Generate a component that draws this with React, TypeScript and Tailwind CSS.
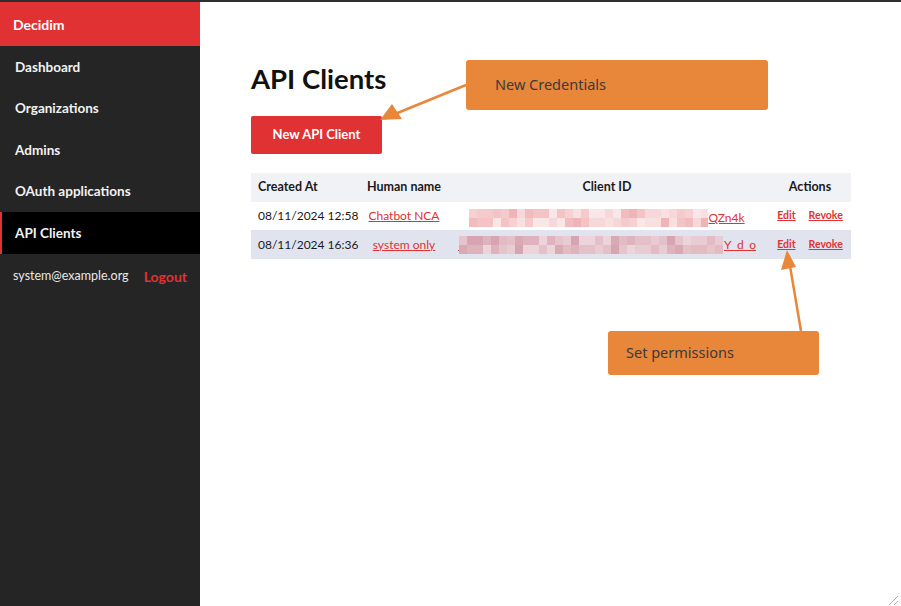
import { ReactNode } from "react";

// sidebar entries, one is active
const menu = ["Dashboard", "Organizations", "Admins", "OAuth applications", "API Clients"];

interface ApiClient {
  id: number;
  created_at: string;
  name: string;
  prefix: string;
  tail: string;
  blurWidth: number;
}

const clients: ApiClient[] = [
  { id: 1, created_at: "08/11/2024 12:58", name: "Chatbot NCA", prefix: "", tail: "QZn4k", blurWidth: 239 },
  { id: 2, created_at: "08/11/2024 16:36", name: "system only", prefix: "_", tail: "Y_d_o", blurWidth: 265 },
];

// pinkish tones for the pixelated (redacted) client id
const tones = [
  "bg-[#f6d0d2]", "bg-[#f3c3c6]", "bg-[#f8dfe0]", "bg-[#f1bcc0]",
  "bg-[#f9e6e7]", "bg-[#efb3b8]", "bg-[#f5cacd]", "bg-[#f7d8da]",
];
const tones2 = [
  "bg-[#e6c4cc]", "bg-[#deb3bd]", "bg-[#e9ccd3]", "bg-[#d9a9b4]",
  "bg-[#ecd4da]", "bg-[#e2bbc4]", "bg-[#d7a5b1]", "bg-[#e4c0c8]",
];

function Mosaic({ width, alt }: { width: number; alt: boolean }) {
  const cells = Math.round(width / 8);
  const palette = alt ? tones2 : tones;
  return (
    <span className="inline-flex flex-col h-[18px] overflow-hidden" style={{ width }}>
      {[0, 1].map((r) => (
        <span key={r} className="flex h-[9px]">
          {Array.from({ length: cells }).map((_, i) => (
            <span key={i} className={`w-[8px] h-[9px] shrink-0 ${palette[(i * 5 + r * 3 + ((i * i) % 7)) % 8]}`} />
          ))}
        </span>
      ))}
    </span>
  );
}

function Callout({ className, children }: { className: string; children: ReactNode }) {
  return (
    <div
      className={`absolute bg-[#e8863a] rounded-[3px] text-[#3b3b3b] text-[14.5px] flex items-center ${className}`}
      style={{ fontFamily: '"Noto Sans", sans-serif' }}
    >
      {children}
    </div>
  );
}

export default function App() {
  return (
    <div
      className="relative flex w-[901px] h-[606px] overflow-hidden bg-white border-t-2 border-[#2e2e2e]"
      style={{ fontFamily: 'Lato, "Liberation Sans", sans-serif' }}
    >
      {/* Sidebar */}
      <aside className="w-[200px] shrink-0 bg-[#252525] flex flex-col">
        <div className="h-[44px] bg-[#e03133] text-white font-bold text-[14px] flex items-center pl-[13px]">
          Decidim
        </div>
        {menu.map((item) => {
          const active = item === "API Clients";
          return (
            <div
              key={item}
              className={`h-[41.5px] flex items-center text-[13.5px] font-bold text-[#f2f2f2] ${
                active ? "bg-black border-l-2 border-[#e03133] pl-[13px]" : "pl-[15px]"
              }`}
            >
              {item}
            </div>
          );
        })}
        <div className="flex items-center justify-between h-[46px] pl-[13px] pr-[13px]">
          <span className="text-[12.5px] text-[#e8e8e8]">system@example.org</span>
          <span className="text-[14px] font-bold text-[#e03133]">Logout</span>
        </div>
      </aside>

      {/* Main content */}
      <main className="flex-1 pl-[51px] pr-[50px] pt-[60px]">
        <h1 className="text-[27.5px] font-bold text-[#111] leading-[34px]">API Clients</h1>
        <button className="mt-[20px] w-[131px] h-[38px] bg-[#e03133] rounded-[2px] text-white text-[13px] font-bold">
          New API Client
        </button>

        <table className="mt-[19px] w-[600px] table-fixed border-collapse text-[12px] text-[#1a1a1a]">
          <colgroup>
            <col className="w-[112px]" />
            <col className="w-[82px]" />
            <col className="w-[324px]" />
            <col className="w-[82px]" />
          </colgroup>
          <thead className="bg-[#f1f2f6] text-[12.5px]">
            <tr className="h-[29px]">
              <th className="text-left pl-[7px] font-bold">Created At</th>
              <th className="text-center font-bold whitespace-nowrap">Human name</th>
              <th className="text-center font-bold">Client ID</th>
              <th className="text-center font-bold">Actions</th>
            </tr>
          </thead>
          <tbody>
            {clients.map((c, idx) => (
              <tr key={c.id} className={idx % 2 === 1 ? "h-[29px] bg-[#e1e4ef]" : "h-[28px] bg-white"}>
                <td className="pl-[7px] whitespace-nowrap">{c.created_at}</td>
                <td className="text-center whitespace-nowrap">
                  <a className="text-[#e03133] underline">{c.name}</a>
                </td>
                <td className="text-center">
                  <a className="inline-flex items-center text-[#e03133] underline whitespace-nowrap">
                    {c.prefix && <span className="w-[1px]">{c.prefix}</span>}
                    <Mosaic width={c.blurWidth} alt={idx === 1} />
                    <span>{c.tail}</span>
                  </a>
                </td>
                <td className="text-center whitespace-nowrap text-[10.5px] font-bold">
                  <a className="text-[#e03133] underline">Edit</a>
                  <a className="text-[#e03133] underline ml-[13px]">Revoke</a>
                </td>
              </tr>
            ))}
          </tbody>
        </table>
      </main>

      {/* Annotations over the screenshot */}
      <Callout className="left-[466px] top-[58px] w-[302px] h-[50px] pl-[29px]">New Credentials</Callout>
      <Callout className="left-[608px] top-[329px] w-[211px] h-[44px] pl-[18px]">Set permissions</Callout>

      <svg className="absolute left-0 top-0 pointer-events-none" width="901" height="606">
        <line x1="466" y1="83" x2="395" y2="112" stroke="#e8863a" strokeWidth="2.5" />
        <polygon points="380,118 392,102 402,117" fill="#e8863a" />
        <line x1="801" y1="329" x2="790" y2="264" stroke="#e8863a" strokeWidth="2.5" />
        <polygon points="787,248 781,268 796,265" fill="#e8863a" />
        {/* resize grip */}
        <line x1="889" y1="603" x2="898" y2="594" stroke="#b0b0b0" strokeWidth="1" />
        <line x1="894" y1="603" x2="898" y2="599" stroke="#b0b0b0" strokeWidth="1" />
      </svg>
    </div>
  );
}
